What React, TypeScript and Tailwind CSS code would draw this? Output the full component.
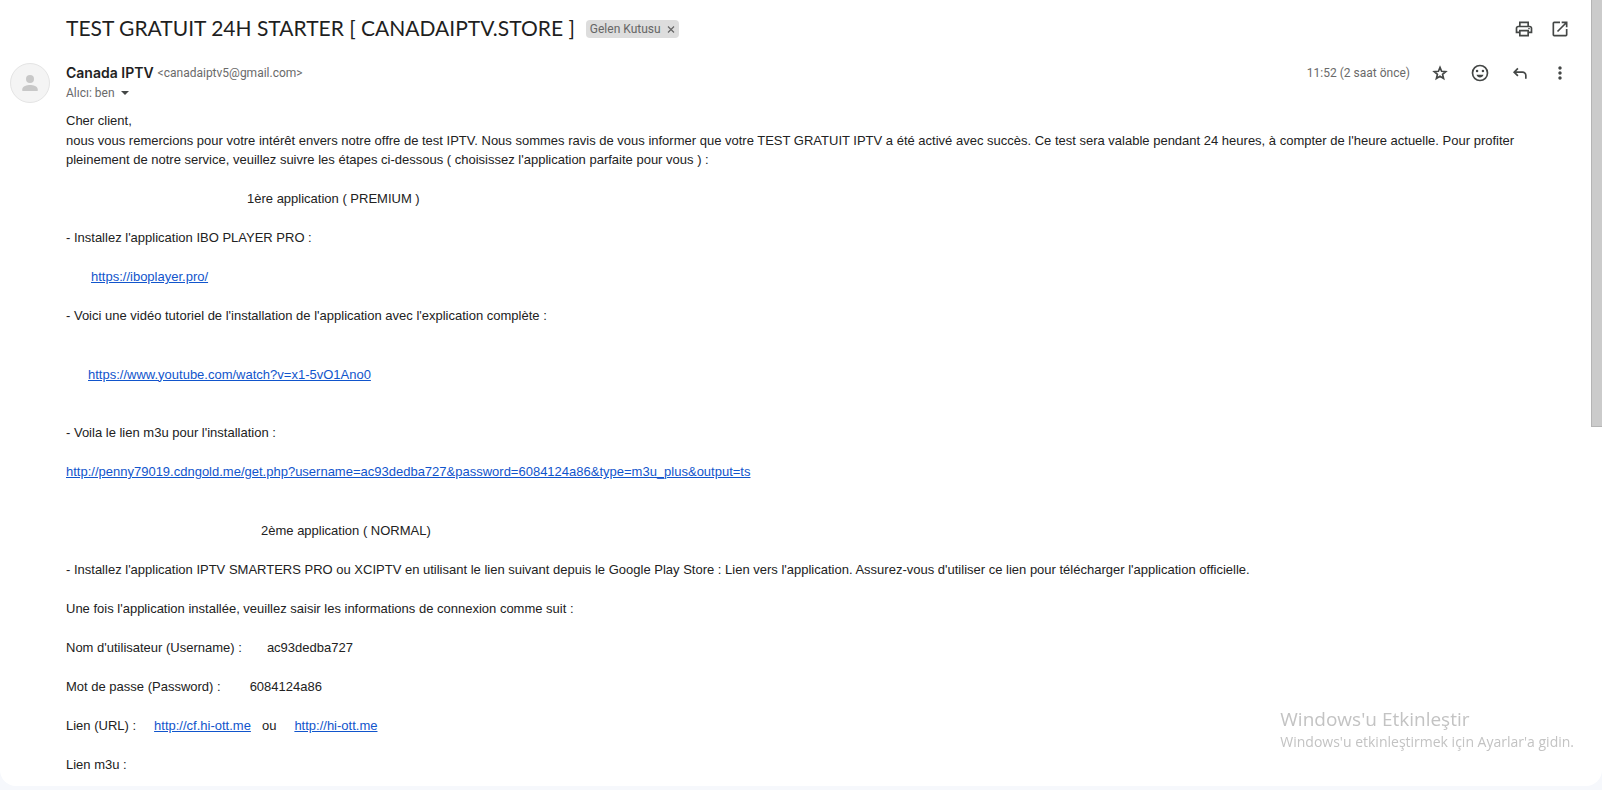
import type { ReactNode } from "react";
import { MdOutlinePrint, MdMoreVert } from "react-icons/md";

function IconButton({ label, children }: { label: string; children: ReactNode }) {
  return (
    <button type="button" aria-label={label} className="flex size-5 items-center justify-center text-[#444746]">
      {children}
    </button>
  );
}

function OpenIcon() {
  return (
    <svg viewBox="0 0 24 24" className="size-5" fill="none" stroke="currentColor" strokeWidth="2">
      <path d="M12 4H5a1 1 0 0 0-1 1v14a1 1 0 0 0 1 1h14a1 1 0 0 0 1-1v-7" />
      <path d="M9 15 19.5 4.5M14 4h6v6" />
    </svg>
  );
}

function StarIcon() {
  return (
    <svg viewBox="0 0 24 24" className="size-5" fill="none" stroke="currentColor" strokeWidth="2">
      <path d="M12 5.300l1.900 4.600 5 .4-3.800 3.300 1.200 4.900-4.300-2.600-4.300 2.600 1.200-4.900-3.800-3.300 5-.4z" />
    </svg>
  );
}

function SmileIcon() {
  return (
    <svg viewBox="0 0 24 24" className="size-5" fill="currentColor">
      <circle cx="12" cy="12" r="9" fill="none" stroke="currentColor" strokeWidth="2" />
      <circle cx="8.5" cy="9.5" r="1.5" />
      <circle cx="15.5" cy="9.5" r="1.5" />
      <path d="M12 17.300c2 0 3.500-1.300 4.200-3.300H7.800c.7 2 2.200 3.300 4.200 3.300z" />
    </svg>
  );
}

function ReplyIcon() {
  return (
    <svg viewBox="0 0 24 24" className="size-5" fill="none" stroke="currentColor" strokeWidth="2">
      <path d="M9.500 6.500 5 11l4.500 4.500M5 11h10a4 4 0 0 1 4 4v4" />
    </svg>
  );
}

function Avatar() {
  return (
    <div className="flex size-10 shrink-0 items-center justify-center rounded-full border border-[#e4e4e4] bg-[#f4f4f4]">
      <svg viewBox="0 0 24 24" className="size-6 text-[#c8c8c8]" fill="currentColor">
        <circle cx="12" cy="8" r="4" />
        <path d="M12 14c-3 0-7.700 1.300-7.700 4.200V20h15.400v-1.800C19.700 15.300 15 14 12 14z" />
      </svg>
    </div>
  );
}

function MailLink({ href }: { href: string }) {
  return (
    <a href={href} className="text-[#1155cc] underline">
      {href}
    </a>
  );
}

export default function App() {
  return (
    <div className="flex h-screen flex-col bg-[#f6f8fc] pb-1 font-['Roboto',sans-serif]">
      <div className="flex min-h-0 flex-1 overflow-hidden rounded-b-2xl bg-white">
        <main className="min-w-0 flex-1 overflow-hidden pr-[21px]">
          <header className="flex items-center pt-[13px] pl-[66px]">
            <h1 className="pb-[2px] font-['Lato',sans-serif] text-[21px] leading-[30px] text-[#1f1f1f]">
              TEST GRATUIT 24H STARTER [ CANADAIPTV.STORE ]
            </h1>
            <span className="ml-[11px] flex h-[18px] items-center gap-1 rounded bg-[#dddddd] pr-[2px] pl-1 text-xs text-[#666666]">
              Gelen Kutusu
              <button type="button" aria-label="Etiketi kaldır" className="flex size-3 items-center justify-center">
                <svg viewBox="0 0 12 12" className="size-3" stroke="currentColor" strokeWidth="1.2">
                  <path d="M3 3.500l6 6M9 3.500l-6 6" />
                </svg>
              </button>
            </span>
            <div className="ml-auto flex gap-4">
              <IconButton label="Yazdır">
                <MdOutlinePrint className="size-5" />
              </IconButton>
              <IconButton label="Yeni pencerede aç">
                <OpenIcon />
              </IconButton>
            </div>
          </header>

          <section className="mt-[18px] flex gap-4 pl-[10px]">
            <Avatar />
            <div className="min-w-0 flex-1">
              <div className="flex h-5 items-center">
                <span className="font-['Inter',sans-serif] text-sm font-semibold text-[#1f1f1f]">Canada IPTV</span>
                <span className="ml-1 text-xs text-[#6a6a6a]">&lt;canadaiptv5@gmail.com&gt;</span>
                <span className="ml-auto text-xs text-[#6a6a6a]">11:52 (2 saat önce)</span>
                <div className="ml-5 flex gap-5">
                  <IconButton label="Yıldız ekle">
                    <StarIcon />
                  </IconButton>
                  <IconButton label="Tepki ekle">
                    <SmileIcon />
                  </IconButton>
                  <IconButton label="Yanıtla">
                    <ReplyIcon />
                  </IconButton>
                  <IconButton label="Diğer">
                    <MdMoreVert className="size-5" />
                  </IconButton>
                </div>
              </div>
              <button type="button" className="flex h-5 items-center gap-[6px] text-xs text-[#6a6a6a]">
                Alıcı: ben
                <svg viewBox="0 0 8 4" className="h-1 w-2" fill="#444746">
                  <path d="M0 0h8L4 4z" />
                </svg>
              </button>
            </div>
          </section>

          <article className="mt-2 mr-[51px] ml-[66px] flex flex-col gap-[1lh] font-['Liberation_Sans',Arial,sans-serif] text-[13px] leading-normal text-[#222222]">
            <p>
              Cher client,
              <br />
              nous vous remercions pour votre intérêt envers notre offre de test IPTV. Nous sommes ravis de vous
              informer que votre TEST GRATUIT IPTV a été activé avec succès. Ce test sera valable pendant 24 heures, à
              compter de l'heure actuelle. Pour profiter pleinement de notre service, veuillez suivre les étapes
              ci-dessous ( choisissez l'application parfaite pour vous ) :
            </p>
            <p className="pl-[181px]">1ère application ( PREMIUM )</p>
            <p>- Installez l'application IBO PLAYER PRO :</p>
            <p className="pl-[25px]">
              <MailLink href="https://iboplayer.pro/" />
            </p>
            <p>- Voici une vidéo tutoriel de l'installation de l'application avec l'explication complète :</p>
            <p className="my-[1lh] pl-[22px]">
              <MailLink href="https://www.youtube.com/watch?v=x1-5vO1Ano0" />
            </p>
            <p>- Voila le lien m3u pour l'installation :</p>
            <p>
              <MailLink href="http://penny79019.cdngold.me/get.php?username=ac93dedba727&password=6084124a86&type=m3u_plus&output=ts" />
            </p>
            <p className="mt-[1lh] pl-[195px]">2ème application ( NORMAL)</p>
            <p>
              - Installez l'application IPTV SMARTERS PRO ou XCIPTV en utilisant le lien suivant depuis le Google Play
              Store : Lien vers l'application. Assurez-vous d'utiliser ce lien pour télécharger l'application
              officielle.
            </p>
            <p>Une fois l'application installée, veuillez saisir les informations de connexion comme suit :</p>
            <p className="flex gap-[25px]">
              <span>Nom d'utilisateur (Username) :</span>
              <span>ac93dedba727</span>
            </p>
            <p className="flex gap-[29px]">
              <span>Mot de passe (Password) :</span>
              <span>6084124a86</span>
            </p>
            <p className="flex">
              <span className="mr-[18px]">Lien (URL) :</span>
              <MailLink href="http://cf.hi-ott.me" />
              <span className="mr-[18px] ml-[11px]">ou</span>
              <MailLink href="http://hi-ott.me" />
            </p>
            <p>Lien m3u :</p>
          </article>
        </main>

        <div className="w-[11px] shrink-0">
          <div className="h-[427px] border-b border-l border-[#b4b4b4] bg-[#cbcbcb]" />
        </div>
      </div>

      <aside className="pointer-events-none fixed right-[28px] bottom-[37px] font-['Open_Sans',sans-serif] text-[#c3c3c3]">
        <p className="text-[19px] leading-6">Windows'u Etkinleştir</p>
        <p className="text-sm leading-[22px]">Windows'u etkinleştirmek için Ayarlar'a gidin.</p>
      </aside>
    </div>
  );
}
